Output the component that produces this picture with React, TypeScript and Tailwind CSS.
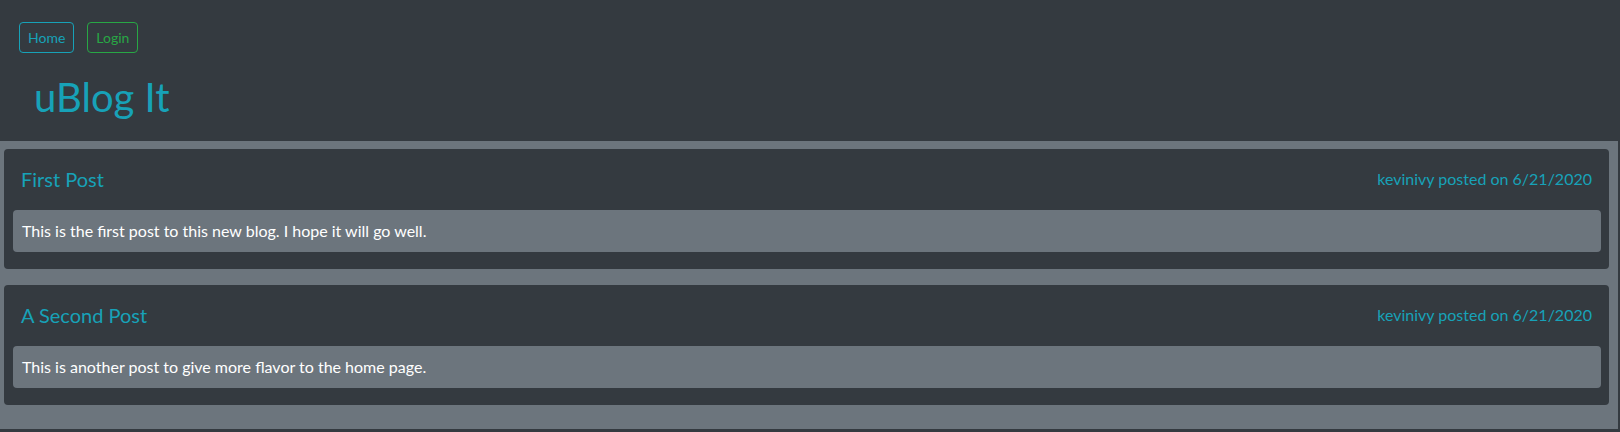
import React from 'react';

interface Post {
    id: number;
    title: string;
    author: string;
    date: string;
    body: string;
}

const posts: Post[] = [
    {
        id: 1,
        title: 'First Post',
        author: 'kevinivy',
        date: '6/21/2020',
        body: 'This is the first post to this new blog. I hope it will go well.',
    },
    {
        id: 2,
        title: 'A Second Post',
        author: 'kevinivy',
        date: '6/21/2020',
        body: 'This is another post to give more flavor to the home page.',
    },
];

const PostCard: React.FC<{ post: Post }> = ({ post }) => (
    <div className="bg-[#343a40] rounded-[4px] pt-[10px] pb-[17px] pl-[9px] pr-[8px] mb-[16px]">
        {/* Cabeçalho do post */}
        <div className="h-[40px] flex items-center justify-between pl-[8px] pr-[9px] text-[#17a2b8]">
            <h5 className="text-[20px] leading-[24px]">{post.title}</h5>
            <span className="text-[16px] leading-[24px]">
                {post.author} posted on {post.date}
            </span>
        </div>
        <div className="mt-[11px] bg-[#6c757d] rounded-[4px] h-[42px] flex items-center px-[9px] text-white text-[16px]">
            {post.body}
        </div>
    </div>
);

const App: React.FC = () => {
    return (
        <div className="min-h-screen bg-[#343a40] font-['Lato','Noto_Sans',sans-serif]">
            {/* Navegação */}
            <header className="h-[141px] pt-[22px] pl-[19px]">
                <div className="flex gap-[13px]">
                    <button className="border border-[#17a2b8] text-[#17a2b8] rounded-[4px] px-[8px] h-[31px] text-[14px]">
                        Home
                    </button>
                    <button className="border border-[#28a745] text-[#28a745] rounded-[4px] px-[8px] h-[31px] text-[14px]">
                        Login
                    </button>
                </div>
                <h1 className="mt-[20px] ml-[15px] text-[40px] leading-[48px] text-[#17a2b8]">uBlog It</h1>
            </header>

            {/* Lista de posts */}
            <main className="bg-[#6c757d] mr-[2px] pt-[8px] pb-[8px] pl-[4px] pr-[9px]">
                {posts.map((post) => (
                    <PostCard key={post.id} post={post} />
                ))}
            </main>
            <div className="h-[3px]" />
        </div>
    );
};

export default App;
